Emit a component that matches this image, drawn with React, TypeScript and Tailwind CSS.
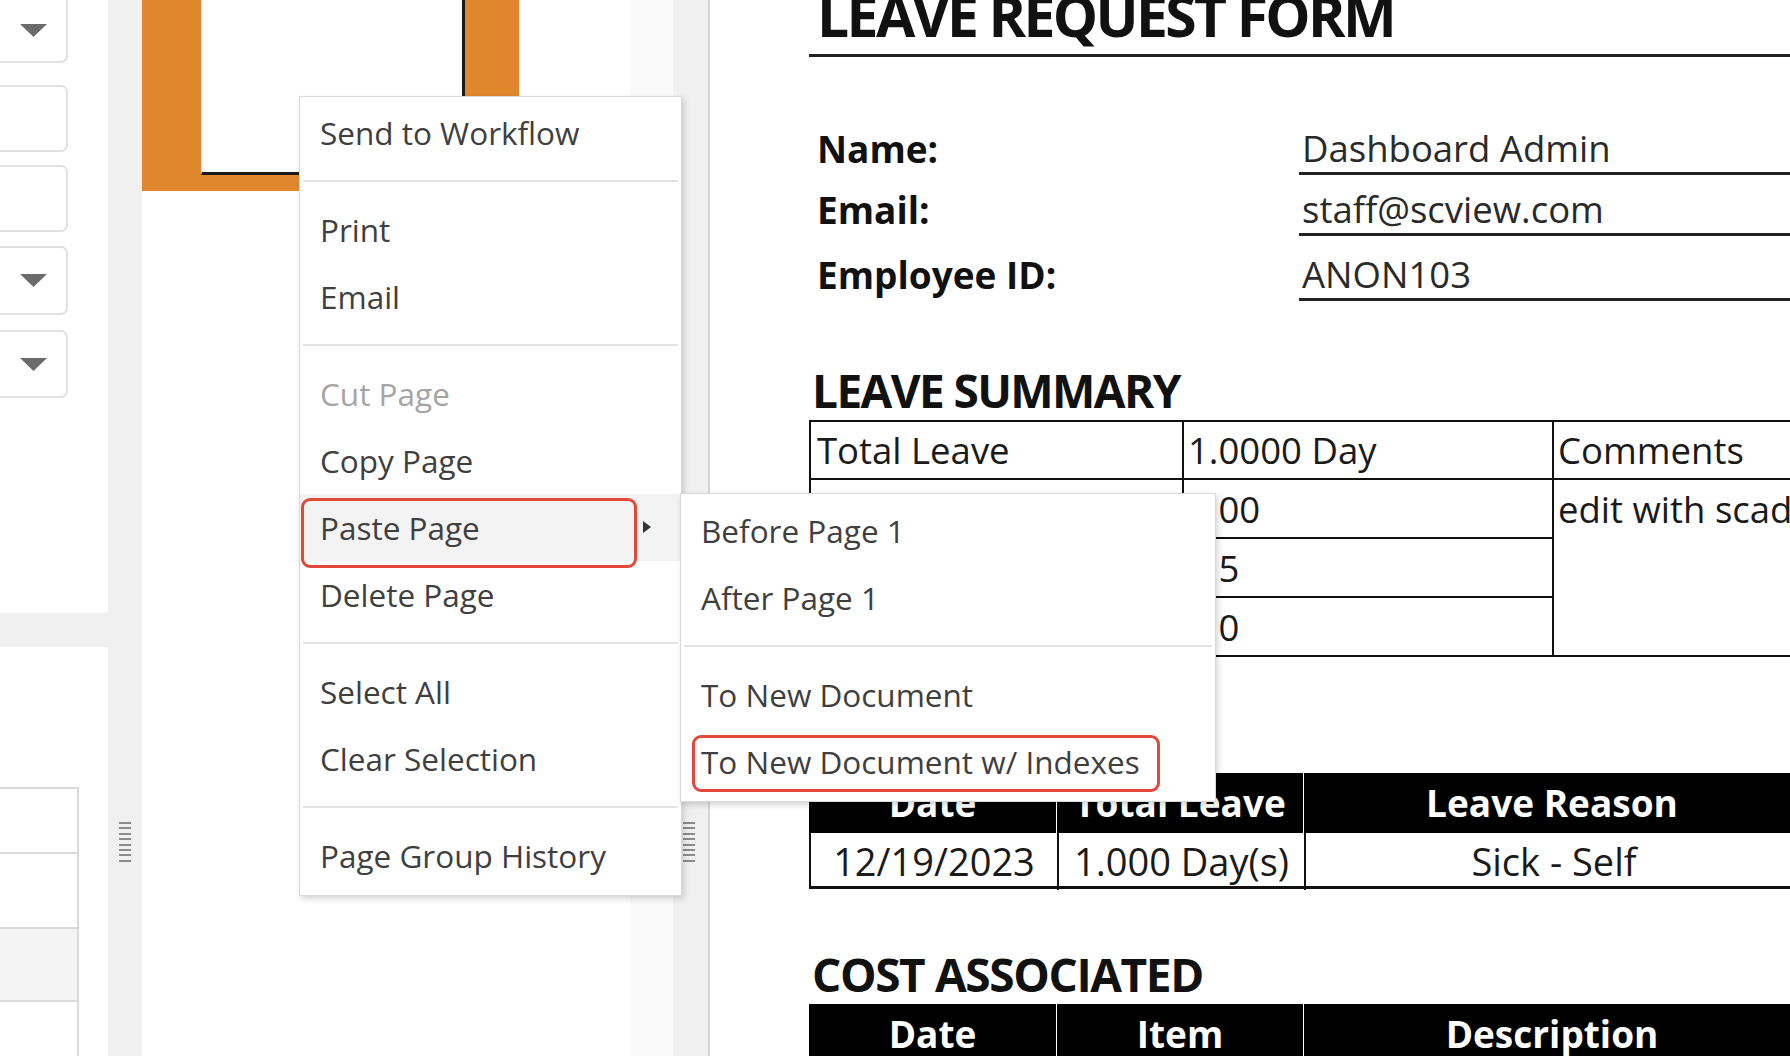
import React from 'react';

const sans = "font-['Open_Sans','Noto_Sans',sans-serif]";

function Arrow() {
  return (
    <svg width="27" height="13" viewBox="0 0 27 13" className="text-[#6b6b6b]">
      <path d="M0 0h27L13.5 13z" fill="currentColor" />
    </svg>
  );
}

function Grip() {
  return (
    <div className="flex w-[12px] flex-col gap-[3.4px]">
      {[0, 1, 2, 3, 4, 5, 6, 7].map((i) => (
        <div key={i} className="h-[2px] w-full bg-[#8c8c8c]" />
      ))}
    </div>
  );
}

function MenuItem({
  label,
  disabled,
  hover,
  children,
}: {
  label: string;
  disabled?: boolean;
  hover?: boolean;
  children?: React.ReactNode;
}) {
  return (
    <div
      className={`relative flex h-[67px] items-center pl-[20px] text-[31.5px] ${
        disabled ? 'text-[#a5a5a5]' : 'text-[#3f3f3f]'
      } ${hover ? 'bg-[#f3f3f3]' : ''}`}
    >
      {label}
      {children}
    </div>
  );
}

function Sep() {
  return (
    <div className="flex h-[30px] items-center px-[3px]">
      <div className="h-[2px] w-full bg-[#e3e3e3]" />
    </div>
  );
}

function LeftPanel() {
  return (
    <div className="flex w-[108px] shrink-0 flex-col bg-[#f0f0f0]">
      <div className="h-[613px] shrink-0 bg-white">
        <div className="flex h-[63px] w-[68px] items-center justify-center rounded-br-[7px] border-r-2 border-b-2 border-[#e1e1e1]">
          <Arrow />
        </div>
        <div className="mt-[22px] h-[67px] w-[68px] rounded-r-[7px] border-y-2 border-r-2 border-[#e1e1e1]" />
        <div className="mt-[13px] h-[67px] w-[68px] rounded-r-[7px] border-y-2 border-r-2 border-[#e1e1e1]" />
        <div className="mt-[14px] flex h-[69px] w-[68px] items-center justify-center rounded-r-[7px] border-y-2 border-r-2 border-[#e1e1e1]">
          <Arrow />
        </div>
        <div className="mt-[15px] flex h-[68px] w-[68px] items-center justify-center rounded-r-[7px] border-y-2 border-r-2 border-[#e1e1e1]">
          <Arrow />
        </div>
      </div>
      <div className="mt-[34px] min-h-0 flex-1 overflow-hidden bg-white pt-[140px]">
        <div className="w-[79px] border-r-2 border-[#dadada]">
          <div className="h-[67px] border-y-2 border-[#dadada]" />
          <div className="h-[75px] border-b-2 border-[#dadada]" />
          <div className="h-[73px] border-b-2 border-[#dadada] bg-[#f4f4f4]" />
          <div className="h-[80px]" />
        </div>
      </div>
    </div>
  );
}

function ThumbPanel() {
  return (
    <div className="flex w-[531px] shrink-0 bg-white">
      <div className="w-[488px]">
        <div className="h-[191px] w-[377px] bg-[#e0872e] pl-[59px]">
          <div className="h-[175px] w-[264px] border-r-[3px] border-b-[3px] border-l border-r-[#1a1a1a] border-b-[#1a1a1a] border-l-[#e8e8e8] bg-white" />
        </div>
      </div>
      <div className="flex-1 bg-[#fafafa]" />
    </div>
  );
}

function Strip({ w, line }: { w: string; line?: boolean }) {
  return (
    <div
      className={`flex shrink-0 justify-start bg-[#f0f0f0] pt-[822px] ${w} ${
        line ? 'border-r-2 border-[#d6d6d6] pl-[10px]' : 'pl-[11px]'
      }`}
    >
      <Grip />
    </div>
  );
}

function InfoRow({ label, value, h }: { label: string; value: string; h: string }) {
  return (
    <div className={`flex ${h}`}>
      <div className="flex w-[490px] items-end pb-[2px] pl-[8px] text-[37px] leading-[48px] font-bold text-[#111]">
        {label}
      </div>
      <div className="flex flex-1 items-end border-b-[3px] border-[#222] pl-[3px] text-[36.5px] leading-[48px] text-[#2a2a2a]">
        {value}
      </div>
    </div>
  );
}

function Document() {
  return (
    <div className={`flex-1 overflow-hidden bg-white pl-[99px] ${sans}`}>
      <div className="w-[1200px]">
        <div className="flow-root h-[57px] border-b-[3px] border-[#222] pl-[8px]">
          <div className="-mt-[20px] text-[57px] leading-[70px] font-bold tracking-[-0.046em] text-[#111]">
            LEAVE REQUEST FORM
          </div>
        </div>

        <div className="mt-[55px]">
          <InfoRow label="Name:" value="Dashboard Admin" h="h-[63px]" />
          <InfoRow label="Email:" value="staff@scview.com" h="h-[61px]" />
          <InfoRow label="Employee ID:" value="ANON103" h="h-[65px]" />
        </div>

        <div className="flex h-[119px] items-end pb-[2px] pl-[3px] text-[46px] leading-[56px] font-bold tracking-[-0.035em] text-[#111]">
          LEAVE SUMMARY
        </div>

        <table className="border-collapse text-[36.5px] text-[#1a1a1a]">
          <colgroup>
            <col className="w-[373px]" />
            <col className="w-[370px]" />
            <col className="w-[370px]" />
          </colgroup>
          <tbody>
            <tr className="h-[58px]">
              <td className="border-2 border-[#111] pl-[6px] align-middle leading-[50px]">Total Leave</td>
              <td className="border-2 border-[#111] pl-[4px] align-middle leading-[50px]">1.0000 Day</td>
              <td className="border-2 border-[#111] pl-[4px] align-middle leading-[50px]">Comments</td>
            </tr>
            <tr className="h-[59px]">
              <td className="border-2 border-[#111] pl-[6px]" />
              <td className="border-2 border-[#111] pl-[4px] align-middle leading-[50px]">0.00</td>
              <td rowSpan={3} className="border-2 border-[#111] pt-[4px] pl-[4px] align-top leading-[50px]">
                edit with scada
              </td>
            </tr>
            <tr className="h-[59px]">
              <td className="border-2 border-[#111] pl-[6px]" />
              <td className="border-2 border-[#111] pl-[4px] align-middle leading-[50px]">1.5</td>
            </tr>
            <tr className="h-[59px]">
              <td className="border-2 border-[#111] pl-[6px]" />
              <td className="border-2 border-[#111] pl-[4px] align-middle leading-[50px]">0.0</td>
            </tr>
          </tbody>
        </table>

        <div className="h-[116px]" />

        <div className="w-[991px]">
          <div className="grid h-[60px] grid-cols-[248px_247px_496px] bg-black text-[37px] font-bold text-white">
            <div className="flex items-center justify-center border-r border-white">Date</div>
            <div className="flex items-center justify-center border-r border-white">Total Leave</div>
            <div className="flex items-center justify-center">Leave Reason</div>
          </div>
          <div className="grid h-[56px] grid-cols-[248px_247px_496px] border-x-2 border-b-[3px] border-[#111] text-[38px] text-[#1a1a1a]">
            <div className="flex items-center justify-center border-r-2 border-[#111]">12/19/2023</div>
            <div className="flex items-center justify-center border-r-2 border-[#111]">1.000 Day(s)</div>
            <div className="flex items-center justify-center">Sick - Self</div>
          </div>
        </div>

        <div className="flex h-[115px] items-end pb-[2px] pl-[3px] text-[46px] leading-[56px] font-bold tracking-[-0.03em] text-[#111]">
          COST ASSOCIATED
        </div>

        <div className="grid h-[60px] w-[991px] grid-cols-[248px_247px_496px] bg-black text-[37px] font-bold text-white">
          <div className="flex items-center justify-center border-r border-white">Date</div>
          <div className="flex items-center justify-center border-r border-white">Item</div>
          <div className="flex items-center justify-center">Description</div>
        </div>
      </div>
    </div>
  );
}

function ContextMenu() {
  return (
    <div
      className={`absolute top-[96px] left-[299px] w-[383px] border border-[#d9d9d9] bg-white pt-[2px] pb-[6px] shadow-[2px_3px_6px_rgba(0,0,0,0.16)] ${sans}`}
    >
      <MenuItem label="Send to Workflow" />
      <Sep />
      <MenuItem label="Print" />
      <MenuItem label="Email" />
      <Sep />
      <MenuItem label="Cut Page" disabled />
      <MenuItem label="Copy Page" />
      <MenuItem label="Paste Page" hover>
        <div className="absolute top-[4px] left-[1px] h-[70px] w-[336px] rounded-[9px] border-[3px] border-[#e2493a]" />
        <svg width="8" height="12" viewBox="0 0 8 12" className="absolute top-[27px] left-[343px]">
          <path d="M0 0l8 6-8 6z" fill="#333" />
        </svg>
      </MenuItem>
      <MenuItem label="Delete Page" />
      <Sep />
      <MenuItem label="Select All" />
      <MenuItem label="Clear Selection" />
      <Sep />
      <MenuItem label="Page Group History" />
    </div>
  );
}

function SubMenu() {
  return (
    <div
      className={`absolute top-[493px] left-[680px] w-[536px] border border-[#d9d9d9] bg-white pt-[3px] pb-[6px] shadow-[2px_3px_6px_rgba(0,0,0,0.16)] ${sans}`}
    >
      <MenuItem label="Before Page 1" />
      <MenuItem label="After Page 1" />
      <Sep />
      <MenuItem label="To New Document" />
      <MenuItem label="To New Document w/ Indexes">
        <div className="absolute top-[7px] left-[11px] h-[57px] w-[468px] rounded-[9px] border-[3px] border-[#e2493a]" />
      </MenuItem>
    </div>
  );
}

export default function App() {
  return (
    <div className="relative flex h-[1056px] w-[1790px] overflow-hidden bg-white">
      <LeftPanel />
      <Strip w="w-[34px]" />
      <ThumbPanel />
      <Strip w="w-[37px]" line />
      <Document />
      <ContextMenu />
      <SubMenu />
    </div>
  );
}
